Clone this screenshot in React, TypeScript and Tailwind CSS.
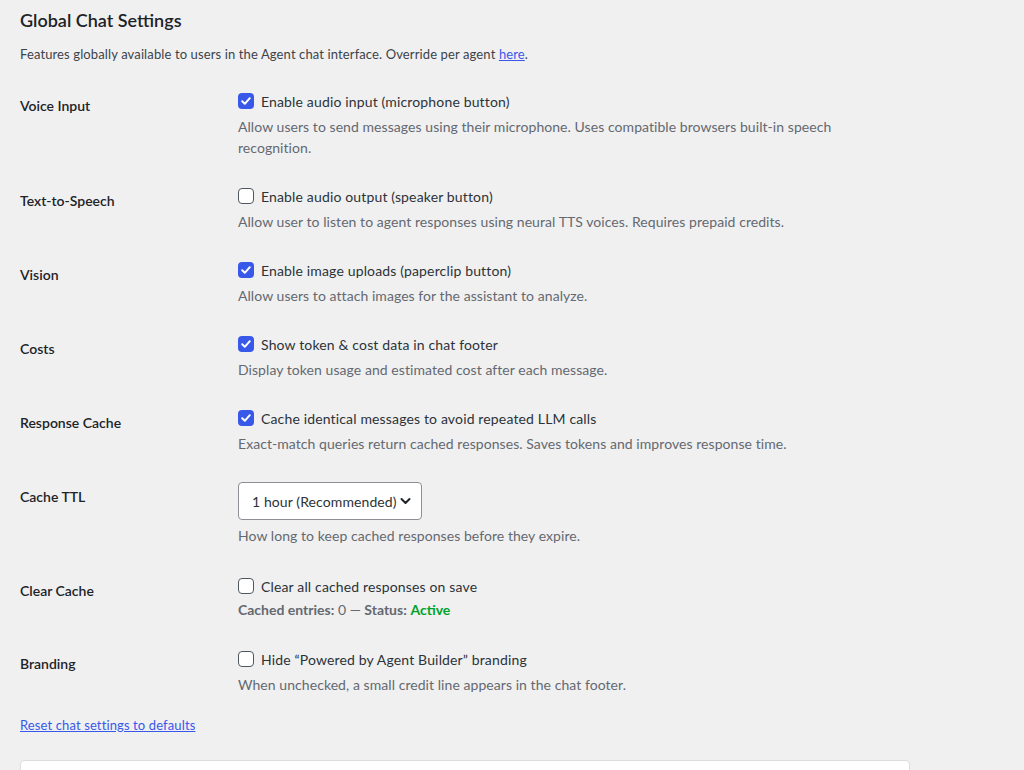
import { ReactNode } from "react";

// Global chat settings — WP admin style form table
type Row = {
  label: string;
  kind: "check" | "select" | "clear";
  checked?: boolean;
  text?: ReactNode;
  desc?: string;
};

const rows: Row[] = [
  {
    label: "Voice Input",
    kind: "check",
    checked: true,
    text: "Enable audio input (microphone button)",
    desc: "Allow users to send messages using their microphone. Uses compatible browsers built-in speech recognition.",
  },
  {
    label: "Text-to-Speech",
    kind: "check",
    checked: false,
    text: "Enable audio output (speaker button)",
    desc: "Allow user to listen to agent responses using neural TTS voices. Requires prepaid credits.",
  },
  {
    label: "Vision",
    kind: "check",
    checked: true,
    text: "Enable image uploads (paperclip button)",
    desc: "Allow users to attach images for the assistant to analyze.",
  },
  {
    label: "Costs",
    kind: "check",
    checked: true,
    text: "Show token & cost data in chat footer",
    desc: "Display token usage and estimated cost after each message.",
  },
  {
    label: "Response Cache",
    kind: "check",
    checked: true,
    text: "Cache identical messages to avoid repeated LLM calls",
    desc: "Exact-match queries return cached responses. Saves tokens and improves response time.",
  },
  {
    label: "Cache TTL",
    kind: "select",
    desc: "How long to keep cached responses before they expire.",
  },
  {
    label: "Clear Cache",
    kind: "clear",
    checked: false,
    text: "Clear all cached responses on save",
  },
  {
    label: "Branding",
    kind: "check",
    checked: false,
    text: "Hide \u201cPowered by Agent Builder\u201d branding",
    desc: "When unchecked, a small credit line appears in the chat footer.",
  },
];

function Checkbox({ checked }: { checked?: boolean }) {
  if (checked) {
    return (
      <span className="w-4 h-4 rounded-[4px] bg-[#3858e9] flex items-center justify-center shrink-0">
        <svg width="12" height="12" viewBox="0 0 12 12" fill="none">
          <path d="M2.2 6.3 L4.8 8.8 L9.8 3.2" stroke="white" strokeWidth="2" strokeLinecap="round" strokeLinejoin="round" />
        </svg>
      </span>
    );
  }
  return <span className="w-4 h-4 rounded-[4px] bg-white border border-[#50575e] shrink-0" />;
}

function CheckLine({ checked, children }: { checked?: boolean; children: ReactNode }) {
  return (
    <label className="flex items-center gap-[7px] h-[22px] text-[14px] tracking-[0.15px] text-[#2c3338]">
      <Checkbox checked={checked} />
      <span>{children}</span>
    </label>
  );
}

export default function App() {
  return (
    <div className="min-h-[770px] bg-[#f0f0f1] pl-5 overflow-hidden" style={{ fontFamily: "Lato, 'Noto Sans', sans-serif" }}>
      <div className="w-[890px]">
        <h2 className="mt-2 text-[18px] leading-6 font-semibold text-[#1d2327]">Global Chat Settings</h2>
        <p className="mt-[13px] text-[13px] leading-[19px] tracking-[0.12px] text-[#3c434a]">
          Features globally available to users in the Agent chat interface. Override per agent{" "}
          <a href="#" className="text-[#3858e9] underline">here</a>.
        </p>

        <div className="mt-[11px]">
          {rows.map((row) => (
            <div key={row.label} className="grid grid-cols-[218px_1fr]">
              <div className="pt-[21px] pr-[10px] text-[14px] leading-5 font-semibold text-[#1d2327]">{row.label}</div>
              <div
                className={`pr-[10px] ${row.kind === "select" ? "pt-4 pb-[14px]" : row.kind === "clear" ? "pt-[15px] pb-[13px]" : "pt-[15px] pb-3"}`}
              >
                {row.kind === "select" ? (
                  <div className="w-[184px] h-[38px] bg-white border border-[#8c8f94] rounded-[4px] flex items-center justify-between pl-[13px] pr-[10px] text-[14px] tracking-[0.1px] text-[#2c3338]">
                    <span>1 hour (Recommended)</span>
                    <svg width="11" height="8" viewBox="0 0 11 8" fill="none">
                      <path d="M1.5 2 L5.5 6 L9.5 2" stroke="#1d2327" strokeWidth="2" strokeLinecap="round" strokeLinejoin="round" />
                    </svg>
                  </div>
                ) : (
                  <CheckLine checked={row.checked}>{row.text}</CheckLine>
                )}
                {row.kind === "clear" && (
                  <p className="mt-[2px] text-[14px] leading-[21px] text-[#646970]">
                    <strong className="font-bold">Cached entries:</strong> 0 {"\u2014"}{" "}
                    <strong className="font-bold">Status:</strong>{" "}
                    <span className="font-bold text-[#00a32a]">Active</span>
                  </p>
                )}
                {row.desc && (
                  <p className={`${row.kind === "select" ? "mt-[5px]" : "mt-1"} text-[14px] leading-[21px] tracking-[0.06px] text-[#646970]`}>{row.desc}</p>
                )}
              </div>
            </div>
          ))}
        </div>

        <a href="#" className="block mt-[9px] text-[13px] leading-[19px] tracking-[0.12px] text-[#3858e9] underline w-max">
          Reset chat settings to defaults
        </a>

        <div className="mt-[25px] h-10 bg-white border border-[#dcdcde] rounded-[4px] shadow-[0_1px_1px_rgba(0,0,0,0.04)]" />
      </div>
    </div>
  );
}
